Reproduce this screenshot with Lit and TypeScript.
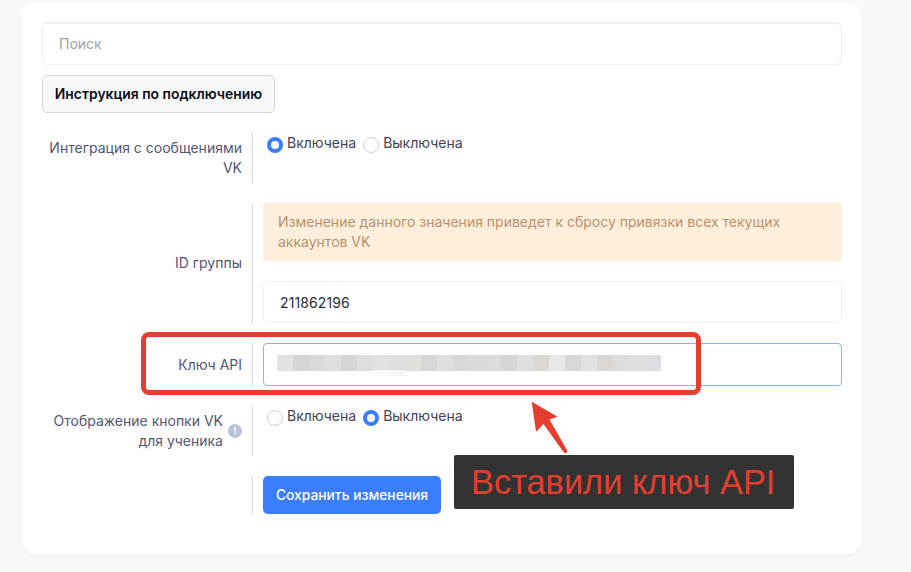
import { LitElement, html, css, svg } from "lit";
import { customElement } from "lit/decorators.js";

const blur = ["#e3e2e2","#d5d5d5","#d9d9d9","#dfdfdf","#d7d6d6","#dededd","#e2e2e3","#dfdfdf","#e0e0dd","#d8d7d7","#e0dfdf","#d8d7d9","#dcdbdb","#dddcdc","#d6d6d6","#e0dfdf","#dbd8d4","#e8e8e8","#d8d8da","#e2e1e1","#dad6d4","#dedddd","#e2e0de","#dfdde1"];

@customElement("app-root")
export class AppRoot extends LitElement {
  static styles = css`
    :host { display: block; width: 911px; height: 572px; background: #f9f9f9; position: relative; overflow: hidden; font-family: Inter, "Liberation Sans", sans-serif; font-size: 14px; color: #3f4254; }
    .page { padding: 2px 49px 0 22px; }
    .card { background: #fff; border-radius: 14px; padding: 20px; height: 552px; box-sizing: border-box; box-shadow: 0 0 1px #e6e6f2, 0 6px 14px rgba(80,80,110,.035); }
    .input { box-sizing: border-box; border: 1px solid #eff0f6; border-radius: 6px; background: #fff; display: flex; align-items: center; }
    .search { height: 43px; padding: 0 0 2px 16px; color: #a1a1a6; border-top-width: 2px; }
    .guide { display: block; box-sizing: border-box; margin-top: 10px; width: 233px; height: 38px; border: 1px solid #d4d6dc; border-radius: 5px; background: #f8f9fb; color: #0c0c14; font: 600 13.9px Inter, sans-serif; padding: 0; }
    .row { display: grid; grid-template-columns: 200px 1fr; column-gap: 21px; }
    .label { position: relative; text-align: right; color: #535674; line-height: 20px; display: flex; align-items: center; justify-content: flex-end; }
    .label::after { content: ""; position: absolute; right: -11px; top: 0; bottom: 0; width: 1px; background: #d9d9de; }
    .r1 { margin-top: 20px; height: 50px; }
    .r2 { margin-top: 20px; height: 120px; }
    .r3 { margin-top: 20px; height: 43px; }
    .r4 { margin-top: 20px; height: 50px; }
    .r5 { margin-top: 20px; height: 38px; }
    .radios { display: flex; align-items: flex-start; gap: 7px; padding: 0 0 0 4px; line-height: 20px; color: #3f4254; }
    .radio { display: flex; align-items: flex-start; gap: 4px; }
    .dot { box-sizing: border-box; width: 16px; height: 16px; border-radius: 50%; border: 1px solid #cfd0d4; background: #fff; margin-top: 4px; }
    .dot.on { border: 4px solid #3a7efb; }
    .alert { box-sizing: border-box; height: 58px; background: #fdefdc; border-radius: 4px; color: #b8926c; line-height: 20px; padding: 9px 15px; }
    .idv { margin-top: 20px; height: 42px; padding-left: 16px; color: #292b38; letter-spacing: .1px; }
    .key { height: 43px; border-color: #85b8e6; border-radius: 4px; position: relative; padding-left: 13px; }
    .strip { display: flex; margin-top: -4px; }
    .strip i { display: block; width: 16px; height: 16px; }
    .ghost { position: absolute; top: 26px; width: 16px; height: 6px; }
    .ghost.a { left: 109px; background: #fbfbfb; }
    .ghost.b { left: 125px; background: #f5f5f5; }
    .help { width: 14px; height: 14px; border-radius: 50%; background: #b9c3dc; color: #fff; font: 700 9px/14px Inter, sans-serif; text-align: center; flex: none; margin-left: 5px; }
    .save { box-sizing: border-box; width: 178px; height: 38px; border: 0; border-radius: 5px; background: #3a7efb; color: #fff; font: 500 13.8px Inter, sans-serif; padding: 0; }
    .box { position: absolute; left: 141px; top: 332px; width: 560px; height: 63px; box-sizing: border-box; border: 5px solid #e53e30; border-radius: 8px; }
    .arrow { position: absolute; left: 525px; top: 395px; }
    .note { position: absolute; left: 454px; top: 455px; width: 340px; height: 54px; box-sizing: border-box; background: #333; border-radius: 2px; color: #e53e30; font: 34.4px/54px "Liberation Sans", sans-serif; padding-left: 17px; white-space: nowrap; }
  `;

  radios(on: boolean) {
    return html`<div class="radios">
      <label class="radio"><span class="dot ${on ? "on" : ""}"></span>Включена</label>
      <label class="radio"><span class="dot ${on ? "" : "on"}"></span>Выключена</label>
    </div>`;
  }

  render() {
    return html`<div class="page"><div class="card">
      <div class="input search">Поиск</div>
      <button class="guide">Инструкция по подключению</button>
      <div class="row r1"><div class="label">Интеграция с сообщениями<br />VK</div>${this.radios(true)}</div>
      <div class="row r2"><div class="label">ID группы</div><div>
        <div class="alert">Изменение данного значения приведет к сбросу привязки всех текущих аккаунтов VK</div>
        <div class="input idv">211862196</div>
      </div></div>
      <div class="row r3"><div class="label">Ключ API</div>
        <div class="input key"><div class="strip">${blur.map((c) => html`<i style="background:${c}"></i>`)}</div><span class="ghost a"></span><span class="ghost b"></span></div>
      </div>
      <div class="row r4"><div class="label"><span>Отображение кнопки VK<br />для ученика</span><span class="help">!</span></div>${this.radios(false)}</div>
      <div class="row r5"><div class="label"></div><div><button class="save">Сохранить изменения</button></div></div>
    </div></div>
    <div class="box"></div>
    <svg class="arrow" width="50" height="62" viewBox="0 0 50 62">
      ${svg`<path d="M6.700 6.700 L32.700 21.700 L24.500 24.500 L42.500 56 Q42.500 58.500 40 58 L38.500 57 L18.500 29 L11 36.700 Z" fill="#e53e30"/>`}
    </svg>
    <div class="note">Вставили ключ API</div>`;
  }
}
